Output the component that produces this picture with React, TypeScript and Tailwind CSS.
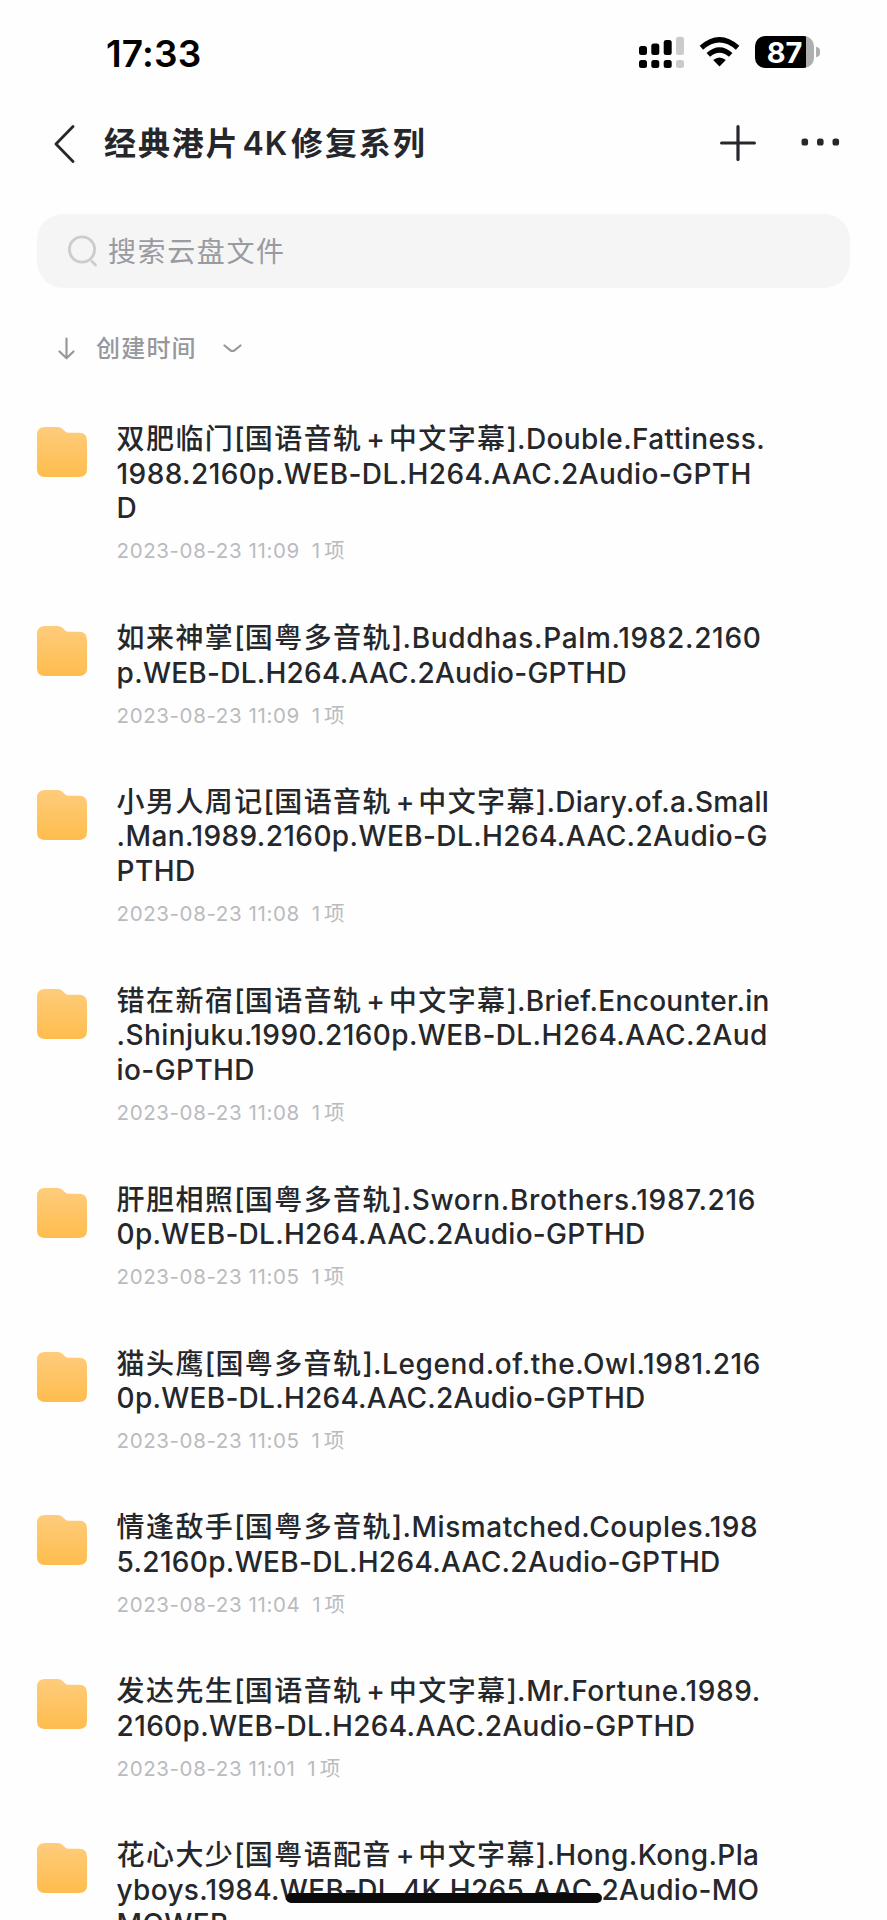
import React from "react";

type Line = { text: string; tracking: string };
type Entry = { name: string; lines: Line[]; time: string };

const entries: Entry[] = [
  {
    name: "双肥临门[国语音轨＋中文字幕]",
    lines: [
      { text: ".Double.Fattiness.", tracking: "tracking-[0.4px]" },
      { text: "1988.2160p.WEB-DL.H264.AAC.2Audio-GPTH", tracking: "tracking-[0.41px]" },
      { text: "D", tracking: "tracking-[0.4px]" },
    ],
    time: "2023-08-23 11:09",
  },
  {
    name: "如来神掌[国粤多音轨]",
    lines: [
      { text: ".Buddhas.Palm.1982.2160", tracking: "tracking-[0.67px]" },
      { text: "p.WEB-DL.H264.AAC.2Audio-GPTHD", tracking: "tracking-[0.25px]" },
    ],
    time: "2023-08-23 11:09",
  },
  {
    name: "小男人周记[国语音轨＋中文字幕]",
    lines: [
      { text: ".Diary.of.a.Small", tracking: "tracking-[0.27px]" },
      { text: ".Man.1989.2160p.WEB-DL.H264.AAC.2Audio-G", tracking: "tracking-[0.4px]" },
      { text: "PTHD", tracking: "tracking-[0.4px]" },
    ],
    time: "2023-08-23 11:08",
  },
  {
    name: "错在新宿[国语音轨＋中文字幕]",
    lines: [
      { text: ".Brief.Encounter.in", tracking: "tracking-[0.31px]" },
      { text: ".Shinjuku.1990.2160p.WEB-DL.H264.AAC.2Aud", tracking: "tracking-[0.4px]" },
      { text: "io-GPTHD", tracking: "tracking-[0.4px]" },
    ],
    time: "2023-08-23 11:08",
  },
  {
    name: "肝胆相照[国粤多音轨]",
    lines: [
      { text: ".Sworn.Brothers.1987.216", tracking: "tracking-[0.67px]" },
      { text: "0p.WEB-DL.H264.AAC.2Audio-GPTHD", tracking: "tracking-[0.26px]" },
    ],
    time: "2023-08-23 11:05",
  },
  {
    name: "猫头鹰[国粤多音轨]",
    lines: [
      { text: ".Legend.of.the.Owl.1981.216", tracking: "tracking-[0.55px]" },
      { text: "0p.WEB-DL.H264.AAC.2Audio-GPTHD", tracking: "tracking-[0.26px]" },
    ],
    time: "2023-08-23 11:05",
  },
  {
    name: "情逢敌手[国粤多音轨]",
    lines: [
      { text: ".Mismatched.Couples.198", tracking: "tracking-[0.54px]" },
      { text: "5.2160p.WEB-DL.H264.AAC.2Audio-GPTHD", tracking: "tracking-[0.32px]" },
    ],
    time: "2023-08-23 11:04",
  },
  {
    name: "发达先生[国语音轨＋中文字幕]",
    lines: [
      { text: ".Mr.Fortune.1989.", tracking: "tracking-[0.62px]" },
      { text: "2160p.WEB-DL.H264.AAC.2Audio-GPTHD", tracking: "tracking-[0.33px]" },
    ],
    time: "2023-08-23 11:01",
  },
  {
    name: "花心大少[国粤语配音＋中文字幕]",
    lines: [
      { text: ".Hong.Kong.Pla", tracking: "tracking-[0.38px]" },
      { text: "yboys.1984.WEB-DL.4K.H265.AAC.2Audio-MO", tracking: "tracking-[0.3px]" },
      { text: "MOWEB", tracking: "tracking-[0.4px]" },
    ],
    time: "2023-08-23 11:01",
  },
];

function Folder() {
  return (
    <svg width="50" height="50" viewBox="0 0 50 50" className="shrink-0">
      <defs>
        <linearGradient id="folder" x1="0" y1="0" x2="0" y2="1">
          <stop offset="0" stopColor="#fecc7c" />
          <stop offset="1" stopColor="#febd4d" />
        </linearGradient>
      </defs>
      <path d="M8 0H20.5C23 0 24.6 1 26.2 2.5L28.2 4.5Q29.6 5.7 31.5 5.7H42Q50 5.7 50 13.7V42Q50 50 42 50H8Q0 50 0 42V8Q0 0 8 0Z" fill="url(#folder)" />
    </svg>
  );
}

function Name({ text }: { text: string }) {
  return (
    <>
      {text.split(/([\[\]＋])/).map((part, i) =>
        part === "[" || part === "]" ? (
          <span key={i} className="relative -top-px tracking-[0.3px]">{part}</span>
        ) : part === "＋" ? (
          <span key={i} className="inline-block w-[26.4px] text-center tracking-normal">+</span>
        ) : (
          <span key={i} className="tracking-[1.4px]">{part}</span>
        ),
      )}
    </>
  );
}

function Row({ entry }: { entry: Entry }) {
  const three = entry.lines.length === 3;
  return (
    <li className={`flex shrink-0 pl-[37px] ${three ? "h-[199px]" : "h-[163.8px]"}`}>
      <Folder />
      <div className="ml-[29.6px] -mt-[5px] whitespace-nowrap">
        <div className="text-[28px] font-medium leading-[34.6px] text-[#25272b]">
          {entry.lines.map((line, i) => (
            <div key={i} className={`h-[34.6px] ${line.tracking}`}>
              {i === 0 && <Name text={entry.name} />}
              {line.text}
            </div>
          ))}
        </div>
        <div className="mt-[11.5px] flex gap-[12px] text-[20.5px] leading-[28px] tracking-[0.6px] text-[#b9bbbe]">
          <span>{entry.time}</span>
          <span><span className="tracking-[4px]">1</span>项</span>
        </div>
      </div>
    </li>
  );
}

function StatusBar() {
  return (
    <div className="flex h-[104px] shrink-0 items-start">
      <div className="ml-[106px] mt-[31px] w-[120px] text-[37px] font-semibold leading-[46px] tracking-[0.2px] text-black">17:33</div>
      <svg className="ml-[412px] mt-[36px]" width="46" height="32" viewBox="0 0 46 32">
        <g fill="#000">
          <rect x="1" y="10" width="8" height="9" rx="2.5" />
          <rect x="13.3" y="7.5" width="8" height="11.5" rx="2.5" />
          <rect x="25.7" y="4" width="8" height="15" rx="2.5" />
          <rect x="1" y="24" width="8" height="8" rx="2.5" />
          <rect x="13.3" y="24" width="8" height="8" rx="2.5" />
          <rect x="25.7" y="24" width="8" height="8" rx="2.5" />
        </g>
        <g fill="#cbcbcb">
          <rect x="38" y="0.7" width="8" height="18.3" rx="2.5" />
          <rect x="38" y="24" width="8" height="8" rx="2.5" />
        </g>
      </svg>
      <svg className="ml-[15px] mt-[37px]" width="41" height="30" viewBox="0 0 41 30">
        <path d="M20.5 29.5L14.2 23.1Q20.5 18 26.8 23.1Z" />
        <path d="M9.3 17.9Q20.5 8 31.7 17.9" fill="none" stroke="#000" strokeWidth="5.2" />
        <path d="M2.4 10.8Q20.5 -5.2 38.6 10.8" fill="none" stroke="#000" strokeWidth="5.2" />
      </svg>
      <div className="ml-[15px] mt-[36px] flex items-center">
        <div className="flex h-[32px] w-[59px] items-center justify-center overflow-hidden rounded-[10px] bg-[linear-gradient(to_right,#000_51px,#afafaf_51px)] text-[29px] font-bold leading-none text-white">
          87
        </div>
        <div className="ml-[2px] h-[10px] w-[4px] rounded-r-full bg-[#afafaf]" />
      </div>
    </div>
  );
}

export default function App() {
  return (
    <div className="relative flex h-[1920px] w-[887px] flex-col overflow-hidden bg-[#fefefe] font-['Inter','Noto_Sans_CJK_SC',sans-serif]">
      <StatusBar />
      <header className="flex h-[80px] shrink-0 items-center text-[#25272b]">
        <svg className="ml-[54px] -mt-px" width="21" height="38" viewBox="0 0 21 38" fill="none" stroke="currentColor" strokeWidth="2.8" strokeLinecap="round" strokeLinejoin="round">
          <path d="M19 1.5L2 19L19 36.5" />
        </svg>
        <h1 className="ml-[29px] flex w-[341px] whitespace-nowrap text-[32px] font-semibold leading-[40px] tracking-[1.9px]">
          <span>经典港片</span>
          <span className="mx-[3px] tracking-[0.8px]">4K</span>
          <span>修复系列</span>
        </h1>
        <svg className="ml-[275px] -mt-[2px]" width="36" height="36" viewBox="0 0 36 36" stroke="currentColor" strokeWidth="3.2" strokeLinecap="round">
          <path d="M18 1.6V34.4M1.6 18H34.4" />
        </svg>
        <svg className="ml-[45px] -mt-[4px]" width="40" height="8" viewBox="0 0 40 8" fill="currentColor">
          <rect x="0.5" y="0.5" width="6.6" height="7" rx="2.6" />
          <rect x="16" y="0.5" width="6.6" height="7" rx="2.6" />
          <rect x="31.5" y="0.5" width="6.6" height="7" rx="2.6" />
        </svg>
      </header>
      <div className="mx-[37px] mt-[30px] flex h-[74px] shrink-0 items-center rounded-[26px] bg-[#f5f5f5]">
        <svg className="ml-[31px]" width="30" height="32" viewBox="0 0 30 32" fill="none" stroke="#cbccd0" strokeWidth="2.8" strokeLinecap="round">
          <circle cx="14" cy="14.5" r="12.6" />
          <path d="M24 26.5L27.5 30" />
        </svg>
        <span className="ml-[10px] mt-[2px] text-[28px] leading-[40px] tracking-[1.6px] text-[#999ba0]">搜索云盘文件</span>
      </div>
      <div className="mt-[42px] flex h-[36px] shrink-0 items-center text-[#96989c]">
        <svg className="ml-[58px]" width="17" height="23" viewBox="0 0 17 23" fill="none" stroke="currentColor" strokeWidth="2.2" strokeLinecap="round" strokeLinejoin="round">
          <path d="M8.5 1.5V21M1.5 14.5L8.5 21.3L15.5 14.5" />
        </svg>
        <span className="ml-[21px] mt-[2px] text-[24px] font-medium leading-[34px] tracking-[1.2px]">创建时间</span>
        <svg className="ml-[26px]" width="19" height="9" viewBox="0 0 19 9" fill="none" stroke="currentColor" strokeWidth="2.2" strokeLinecap="round" strokeLinejoin="round">
          <path d="M1.5 1.5L7.5 6.3Q9.5 7.7 11.5 6.3L17.5 1.5" />
        </svg>
      </div>
      <ul className="mt-[61px] flex flex-col">
        {entries.map((entry) => (
          <Row key={entry.name} entry={entry} />
        ))}
      </ul>
      <div className="absolute left-[286px] top-[1893px] h-[10px] w-[316px] rounded-full bg-[#0b0b0c]" />
    </div>
  );
}
